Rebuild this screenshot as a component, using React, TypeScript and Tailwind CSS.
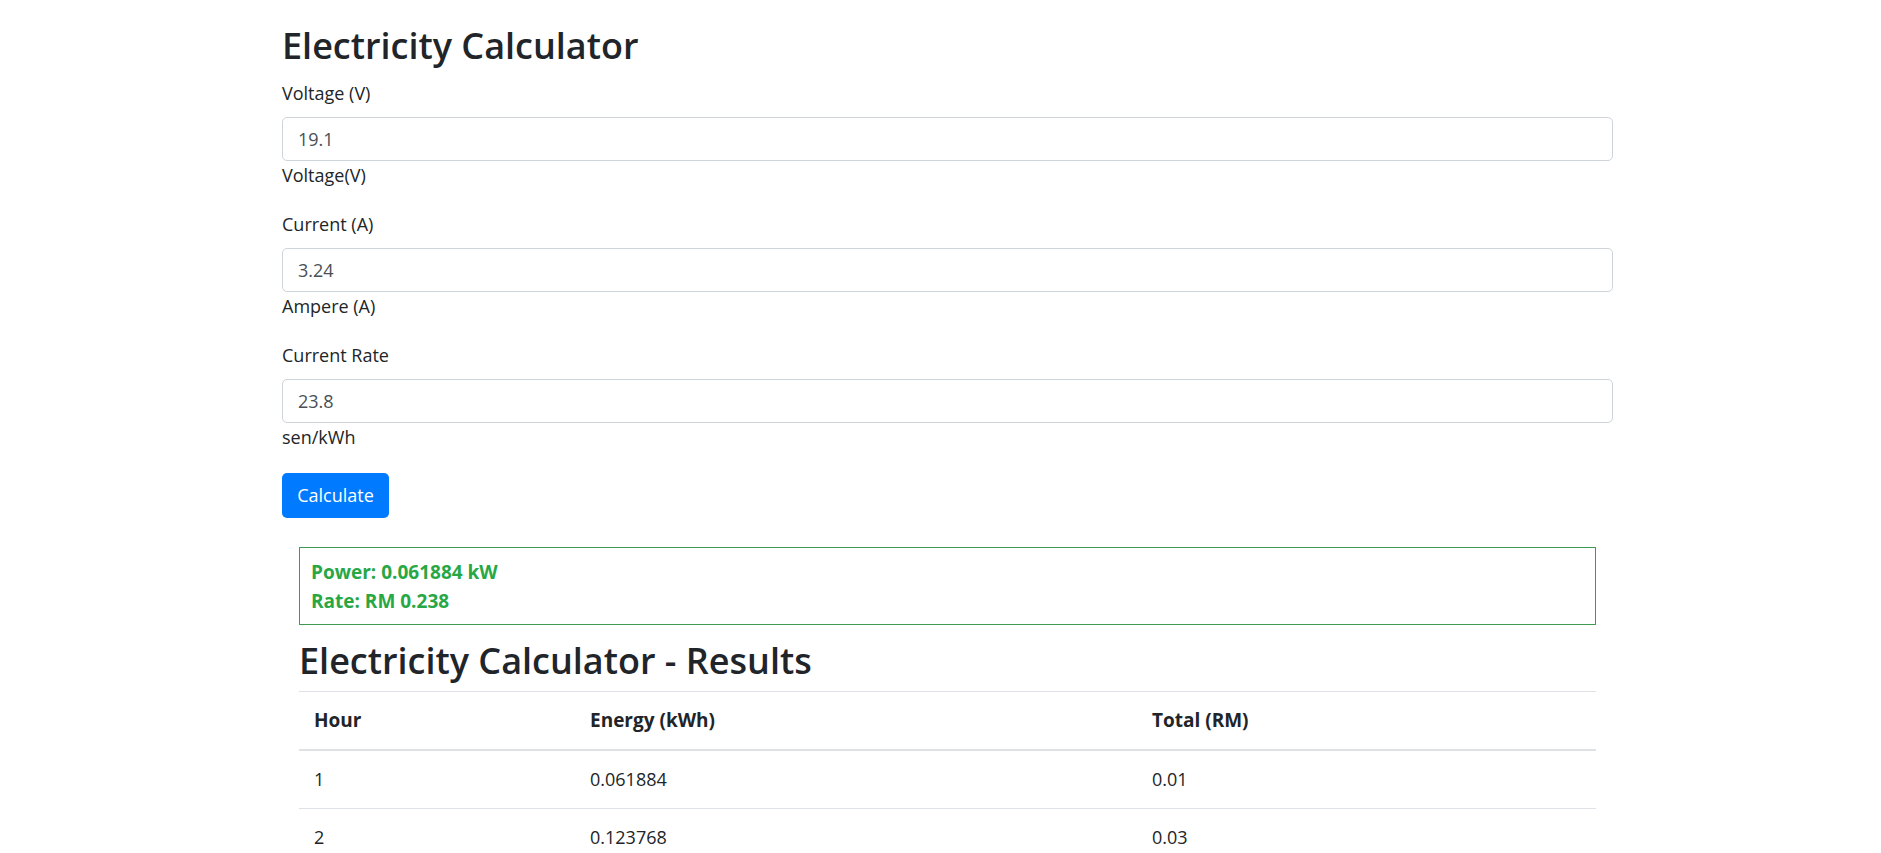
import React from "react";

const fields = [
  { label: "Voltage (V)", value: "19.1", help: "Voltage(V)" },
  { label: "Current (A)", value: "3.24", help: "Ampere (A)" },
  { label: "Current Rate", value: "23.8", help: "sen/kWh" },
];

const rows = [
  { hour: 1, energy: "0.061884", total: "0.01" },
  { hour: 2, energy: "0.123768", total: "0.03" },
];

export default function App() {
  return (
    <div
      className="min-h-screen bg-white text-[#212529] text-[18px]"
      style={{ fontFamily: '"Open Sans", "Noto Sans", sans-serif' }}
    >
      <div className="ml-[282px] w-[1331px] pt-[24px]">
        <h1 className="text-[36px] font-semibold leading-[1.2] mb-[13px]">Electricity Calculator</h1>

        <form onSubmit={(e) => e.preventDefault()}>
          {fields.map((f) => (
            <div key={f.label} className="mb-[21px]">
              <label className="block leading-[27px] mb-[10px]">{f.label}</label>
              <input
                type="text"
                defaultValue={f.value}
                className="block w-full h-[44px] px-[15px] border border-[#ced4da] rounded-[5px] text-[#495057] outline-none"
              />
              <span className="block leading-[29px]">{f.help}</span>
            </div>
          ))}
          <button className="w-[107px] h-[45px] bg-[#007bff] text-white rounded-[5px]">Calculate</button>
        </form>

        <div className="mx-[17px] mt-[29px]">
          <div className="border border-[#3d9a4e] pt-[10px] pb-[8px] px-[11px] text-[#28a745] font-bold text-[19px] leading-[29px]">
            <div>Power: 0.061884 kW</div>
            <div>Rate: RM 0.238</div>
          </div>

          <h2 className="text-[36px] font-semibold leading-[1.2] mt-[14px] mb-[9px]">Electricity Calculator - Results</h2>

          <table className="w-full border-collapse">
            <thead>
              <tr className="border-t border-[#dee2e6]">
                <th className="w-[276px] text-left font-bold text-[19px] px-[15px] py-[15px] leading-[27px] border-b-2 border-[#dee2e6]">Hour</th>
                <th className="w-[562px] text-left font-bold text-[19px] px-[15px] py-[15px] leading-[27px] border-b-2 border-[#dee2e6]">Energy (kWh)</th>
                <th className="text-left font-bold text-[19px] px-[15px] py-[15px] leading-[27px] border-b-2 border-[#dee2e6]">Total (RM)</th>
              </tr>
            </thead>
            <tbody>
              {rows.map((r) => (
                <tr key={r.hour} className="border-b border-[#dee2e6]">
                  <td className="px-[15px] py-[15px] leading-[27px]">{r.hour}</td>
                  <td className="px-[15px] py-[15px] leading-[27px]">{r.energy}</td>
                  <td className="px-[15px] py-[15px] leading-[27px]">{r.total}</td>
                </tr>
              ))}
            </tbody>
          </table>
        </div>
      </div>
    </div>
  );
}
